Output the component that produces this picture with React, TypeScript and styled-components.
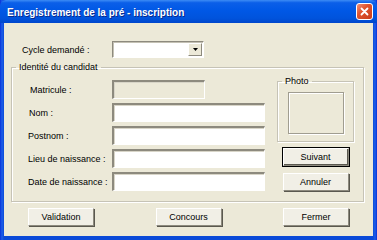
import React from 'react';
import styled, { createGlobalStyle } from 'styled-components';

const GlobalStyle = createGlobalStyle`
  html, body {
    margin: 0;
    padding: 0;
    background: #ece9d8;
  }
  body {
    font-family: "Liberation Sans", Arial, sans-serif;
    font-size: 9px;
    color: #000;
  }
`;

const Window = styled.div`
  width: 377px;
  height: 240px;
  display: flex;
  flex-direction: column;
  background: linear-gradient(90deg, #0831d9 0, #1d5ee8 2px, #0a4ad8 4px, #0a4ad8 373px, #1d5ee8 375px, #0831d9 377px);
  box-sizing: border-box;
  overflow: hidden;
`;

const TitleBar = styled.div`
  height: 23px;
  flex: none;
  display: flex;
  align-items: center;
  justify-content: space-between;
  padding: 0 4px 0 7px;
  background: linear-gradient(180deg, #3d8cf5 0%, #0b5fe8 12%, #0058e6 45%, #0053dc 80%, #0046cc 100%);
  border-radius: 6px 6px 0 0;
`;

const Title = styled.span`
  color: #fff;
  font-weight: bold;
  font-size: 10px;
  text-shadow: 1px 1px 0 #0a2a8a;
  margin-top: 1px;
`;

const CloseButton = styled.div`
  width: 15px;
  height: 15px;
  border: 1px solid #fff;
  border-radius: 3px;
  background: linear-gradient(135deg, #f0907a 0%, #e0542e 40%, #c83c1a 100%);
  display: flex;
  align-items: center;
  justify-content: center;
  margin-top: -1px;
`;

const Client = styled.div`
  flex: 1;
  margin: 0 4px 4px 4px;
  background: #ece9d8;
  display: flex;
  flex-direction: column;
`;

const CycleRow = styled.div`
  display: flex;
  align-items: center;
  margin-top: 18px;
  padding-left: 18px;
  height: 17px;
`;

const Label = styled.span<{ $width?: number }>`
  width: ${p => p.$width ?? 84}px;
  flex: none;
  white-space: nowrap;
`;

const Combo = styled.div`
  width: 92px;
  height: 17px;
  box-sizing: border-box;
  background: #fff;
  border-top: 1px solid #8d8a7e;
  border-left: 1px solid #8d8a7e;
  border-right: 1px solid #fff;
  border-bottom: 1px solid #fff;
  box-shadow: inset 1px 1px 0 #c4c1b4;
  display: flex;
  justify-content: flex-end;
  padding: 1px;
`;

const ComboArrow = styled.div`
  width: 12px;
  background: #ece9d8;
  border-top: 1px solid #fff;
  border-left: 1px solid #fff;
  border-right: 1px solid #8d8a7e;
  border-bottom: 1px solid #8d8a7e;
  display: flex;
  align-items: center;
  justify-content: center;
`;

const GroupBox = styled.fieldset`
  margin: 3px 9px 0 7px;
  padding: 2px 9px 10px 4px;
  border: 1px solid #c6c3b6;
  box-shadow: inset 1px 1px 0 #fff, 1px 1px 0 #fff;
  display: flex;
  gap: 12px;
  min-width: 0;
`;

const Legend = styled.legend<{ $offset?: number }>`
  padding: 0 3px;
  margin-left: ${p => p.$offset ?? 0}px;
  line-height: 12px;
  font-size: 9px;
`;

const FieldGrid = styled.div`
  margin: 5px 0 0 12px;
  display: grid;
  grid-template-columns: 84px 153px;
  grid-auto-rows: 19px;
  row-gap: 4px;
  align-items: center;
`;

const TextInput = styled.div<{ $disabled?: boolean }>`
  height: 19px;
  box-sizing: border-box;
  background: ${p => (p.$disabled ? '#ece9d8' : '#fff')};
  border-top: 2px solid #8d8a7e;
  border-left: 2px solid #8d8a7e;
  border-right: 1px solid #fff;
  border-bottom: 1px solid #fff;
  box-shadow: inset 1px 1px 0 #d8d5c8;
`;

const SideColumn = styled.div`
  width: 77px;
  display: flex;
  flex-direction: column;
  align-items: center;
`;

const PhotoBox = styled.fieldset`
  width: 77px;
  box-sizing: border-box;
  margin: 0;
  padding: 5px 0 7px 0;
  border: 1px solid #c6c3b6;
  box-shadow: inset 1px 1px 0 #fff, 1px 1px 0 #fff;
  display: flex;
  justify-content: center;
  min-width: 0;
`;

const PhotoFrame = styled.div`
  width: 56px;
  height: 42px;
  box-sizing: border-box;
  border: 1px solid #a09d90;
  box-shadow: 1px 1px 0 #fff, inset 1px 1px 0 #fff;
`;

const Button = styled.div<{ $default?: boolean }>`
  width: 66px;
  height: 18px;
  box-sizing: border-box;
  display: flex;
  align-items: center;
  justify-content: center;
  background: #f1efe6;
  border-top: 1px solid #fff;
  border-left: 1px solid #fff;
  border-right: 1px solid #8d8a7e;
  border-bottom: 1px solid #8d8a7e;
  box-shadow: ${p => (p.$default ? '0 0 0 1px #000, inset -1px -1px 0 #5a584f' : '1px 1px 0 #5a584f')};
  font-size: 9px;
  color: #000;
`;

const SideButtons = styled.div`
  margin-top: 6px;
  display: flex;
  flex-direction: column;
  gap: 7px;
`;

const Footer = styled.div`
  display: flex;
  justify-content: space-between;
  padding: 0 24px;
  margin-top: 6px;
`;

const fields = [
  { label: 'Matricule :', disabled: true, short: true, indent: 2 },
  { label: 'Nom :', indent: 1 },
  { label: 'Postnom :' },
  { label: 'Lieu de naissance :' },
  { label: 'Date de naissance :' },
];

export default function App() {
  return (
    <>
      <GlobalStyle />
      <Window>
        <TitleBar>
          <Title>Enregistrement de la pré - inscription</Title>
          <CloseButton>
            <svg width="9" height="9" viewBox="0 0 9 9">
              <path d="M1.5 1.5 L7.5 7.5 M7.5 1.5 L1.5 7.5" stroke="#fff" strokeWidth="1.8" strokeLinecap="round" />
            </svg>
          </CloseButton>
        </TitleBar>
        <Client>
          <CycleRow>
            <Label $width={90}>Cycle demandé :</Label>
            <Combo>
              <ComboArrow>
                <svg width="5" height="3" viewBox="0 0 5 3">
                  <path d="M0 0 H5 L2.5 3 Z" fill="#000" />
                </svg>
              </ComboArrow>
            </Combo>
          </CycleRow>
          <GroupBox>
            <Legend>Identité du candidat</Legend>
            <FieldGrid>
              {fields.map(f => (
                <React.Fragment key={f.label}>
                  <Label style={{ paddingLeft: f.indent ?? 0 }}>{f.label}</Label>
                  <TextInput $disabled={f.disabled} style={f.short ? { width: 93 } : undefined} />
                </React.Fragment>
              ))}
            </FieldGrid>
            <SideColumn>
              <PhotoBox>
                <Legend $offset={4}>Photo</Legend>
                <PhotoFrame />
              </PhotoBox>
              <SideButtons>
                <Button $default>Suivant</Button>
                <Button>Annuler</Button>
              </SideButtons>
            </SideColumn>
          </GroupBox>
          <Footer>
            <Button>Validation</Button>
            <Button>Concours</Button>
            <Button>Fermer</Button>
          </Footer>
        </Client>
      </Window>
    </>
  );
}
